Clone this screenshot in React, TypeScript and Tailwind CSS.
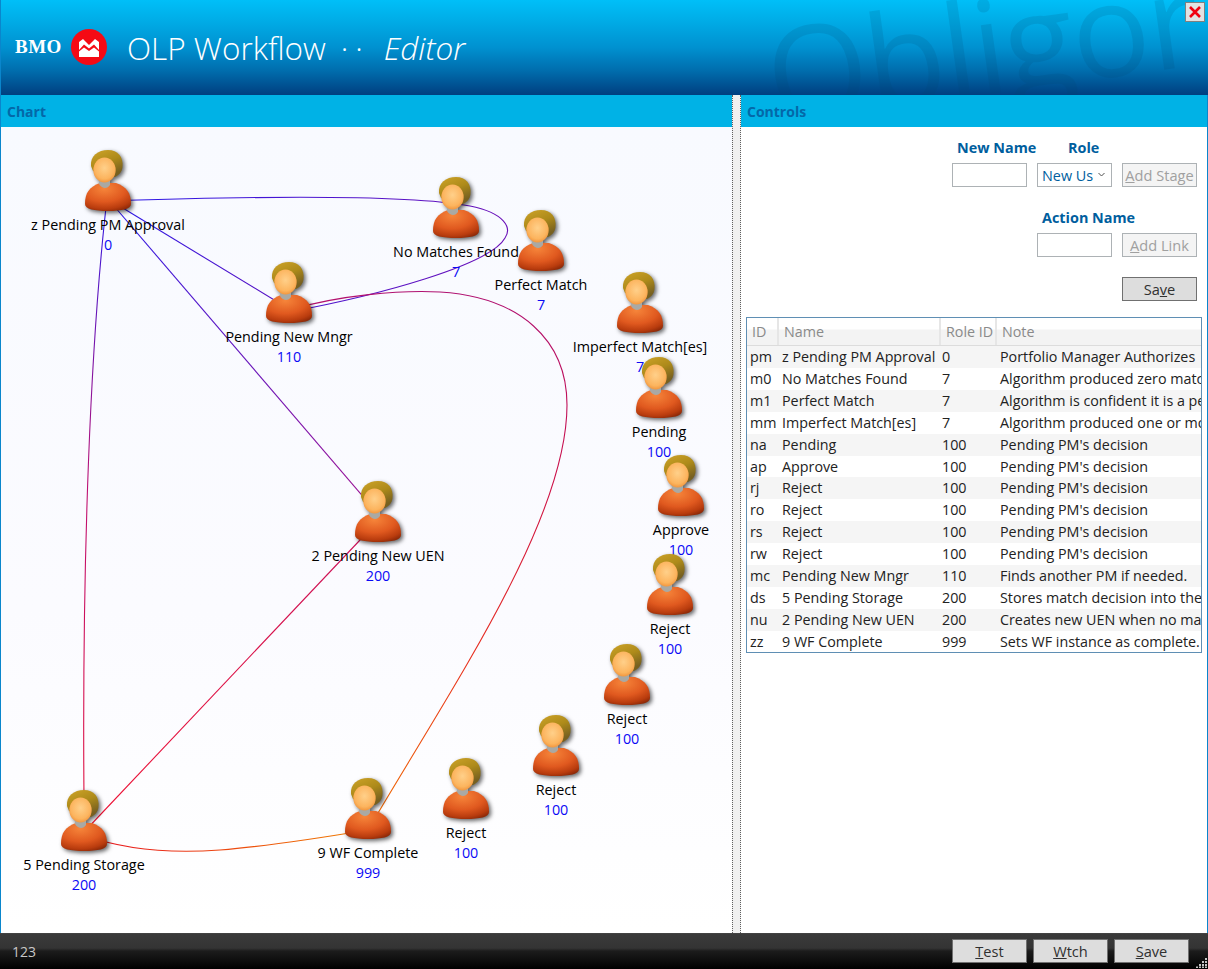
import React from "react";

const FONT = "font-['Open_Sans','Noto_Sans',sans-serif]";

const nodes = [
  { name: "Imperfect Match[es]", role: "7", cx: 640, top: 272 },
  { name: "Pending", role: "100", cx: 659, top: 357 },
  { name: "Approve", role: "100", cx: 681, top: 455 },
  { name: "Reject", role: "100", cx: 670, top: 554 },
  { name: "Reject", role: "100", cx: 627, top: 644 },
  { name: "Reject", role: "100", cx: 556, top: 715 },
  { name: "Reject", role: "100", cx: 466, top: 758 },
  { name: "Perfect Match", role: "7", cx: 541, top: 210 },
  { name: "No Matches Found", role: "7", cx: 456, top: 177 },
  { name: "z Pending PM Approval", role: "0", cx: 108, top: 150 },
  { name: "Pending New Mngr", role: "110", cx: 289, top: 262 },
  { name: "2 Pending New UEN", role: "200", cx: 378, top: 481 },
  { name: "5 Pending Storage", role: "200", cx: 84, top: 790 },
  { name: "9 WF Complete", role: "999", cx: 368, top: 778 },
];

const rows = [
  ["pm", "z Pending PM Approval", "0", "Portfolio Manager Authorizes"],
  ["m0", "No Matches Found", "7", "Algorithm produced zero matches"],
  ["m1", "Perfect Match", "7", "Algorithm is confident it is a perfect match"],
  ["mm", "Imperfect Match[es]", "7", "Algorithm produced one or more matches"],
  ["na", "Pending", "100", "Pending PM's decision"],
  ["ap", "Approve", "100", "Pending PM's decision"],
  ["rj", "Reject", "100", "Pending PM's decision"],
  ["ro", "Reject", "100", "Pending PM's decision"],
  ["rs", "Reject", "100", "Pending PM's decision"],
  ["rw", "Reject", "100", "Pending PM's decision"],
  ["mc", "Pending New Mngr", "110", "Finds another PM if needed."],
  ["ds", "5 Pending Storage", "200", "Stores match decision into the database"],
  ["nu", "2 Pending New UEN", "200", "Creates new UEN when no match exists"],
  ["zz", "9 WF Complete", "999", "Sets WF instance as complete."],
];

function Person() {
  return (
    <svg width="60" height="70" viewBox="0 0 60 70" className="block [filter:blur(0.35px)_drop-shadow(2px_2px_2px_rgba(0,0,0,0.6))]">
      <defs>
        <linearGradient id="hair" x1="0" y1="0" x2="0.5" y2="1">
          <stop offset="0" stopColor="#cfa428" />
          <stop offset="0.55" stopColor="#ad8a1a" />
          <stop offset="1" stopColor="#776020" />
        </linearGradient>
        <radialGradient id="face" cx="0.5" cy="0.42" r="0.62">
          <stop offset="0" stopColor="#ffd08a" />
          <stop offset="0.7" stopColor="#fcb45e" />
          <stop offset="1" stopColor="#ef8f36" />
        </radialGradient>
        <radialGradient id="body" cx="0.42" cy="0.2" r="0.85">
          <stop offset="0" stopColor="#f6853a" />
          <stop offset="0.55" stopColor="#e0591f" />
          <stop offset="0.85" stopColor="#b93c0e" />
          <stop offset="1" stopColor="#8f2a08" />
        </radialGradient>
      </defs>
      <path d="M3 61C3 50 7 44 18 40L34 40C45 44 49 50 49 61C49 66 40 68 26 68C12 68 3 66 3 61Z" fill="url(#body)" />
      <path d="M17 37L17 41C20 45.5 25 46.5 28 42L28 37Z" fill="#a9a9a4" />
      <path d="M9 23C8 13 16 7 26 7C36 7 41.5 14 40.5 24C40 29 37 32 33 34L20 31L11 28Z" fill="url(#hair)" />
      <ellipse cx="22.5" cy="27" rx="11.2" ry="12.5" fill="url(#face)" />
    </svg>
  );
}

function Node({ name, role, cx, top }: { name: string; role: string; cx: number; top: number }) {
  return (
    <div
      className="absolute w-[220px] -ml-[110px] flex flex-col items-center text-[14.35px] leading-[20px] text-black whitespace-nowrap"
      style={{ left: cx - 1, top: top - 134 }}
    >
      <div className="w-[60px] h-[72px] relative">
        <div className="absolute left-[4px] top-0">
          <Person />
        </div>
      </div>
      <span>{name}</span>
      <span className="text-[#0a0af5]">{role}</span>
    </div>
  );
}

function Edges() {
  const grad = (id: string, x1: number, y1: number, x2: number, y2: number, stops: string[]) => (
    <linearGradient id={id} gradientUnits="userSpaceOnUse" x1={x1} y1={y1} x2={x2} y2={y2}>
      {stops.map((c, i) => (
        <stop key={i} offset={i / (stops.length - 1)} stopColor={c} />
      ))}
    </linearGradient>
  );
  return (
    <svg className="absolute -left-px -top-[127px]" width="1208" height="969" fill="none" strokeWidth="1.1">
      <defs>
        {grad("e1", 108, 190, 84, 800, ["#2a18e8", "#c01070", "#e01040"])}
        {grad("e2", 108, 199, 378, 514, ["#2a18e8", "#a01090"])}
        {grad("e3", 108, 199, 289, 310, ["#2a18e8", "#5a10c0"])}
        {grad("e4", 108, 200, 500, 260, ["#2a18e8", "#6a10b8"])}
        {grad("e5", 400, 290, 370, 830, ["#b01070", "#cc1048", "#e83020", "#f07000"])}
        {grad("e6", 378, 521, 84, 832, ["#c8105a", "#f01030"])}
        {grad("e7", 84, 835, 368, 830, ["#e81020", "#f08000"])}
      </defs>
      <path d="M108 190C90 340 82 560 84 800" stroke="url(#e1)" />
      <path d="M108 199L378 514" stroke="url(#e2)" />
      <path d="M108 199L289 309" stroke="url(#e3)" />
      <path d="M108 201C230 197 400 193 470 206C505 213 512 228 505 238C490 265 380 295 289 312" stroke="url(#e4)" />
      <path d="M289 310C340 295 400 290 440 292C520 297 567 340 567 405C567 520 450 690 368 830" stroke="url(#e5)" />
      <path d="M378 521L84 832" stroke="url(#e6)" />
      <path d="M84 835C130 852 180 853 220 850C270 846 320 838 368 830" stroke="url(#e7)" />
    </svg>
  );
}

function Btn({ children, disabled }: { children: React.ReactNode; disabled?: boolean }) {
  return (
    <div
      className={`w-[75px] h-[24px] flex items-center justify-center pt-[1px] text-[14.6px] leading-none whitespace-nowrap border ${
        disabled ? "border-[#adb2b5] bg-[#f4f4f4] text-[#a0a0a0]" : "border-[#707070] bg-[#dddddd] text-[#303030]"
      }`}
    >
      <span>{children}</span>
    </div>
  );
}

export default function App() {
  return (
    <div className={`w-[1208px] h-[969px] flex flex-col overflow-hidden bg-white ${FONT}`}>
      {/* Header */}
      <header className="relative h-[95px] shrink-0 overflow-hidden flex items-center bg-[linear-gradient(to_bottom,#00bff8_0%,#00aee8_20%,#0091d0_50%,#006cac_75%,#003f80_100%)] border-l border-[#0a86cc]">
        <span className="absolute left-[766px] -top-[25px] text-[130px] leading-[200px] tracking-[-2px] text-[#00456f] opacity-[0.14] -rotate-[8deg] origin-left whitespace-nowrap">
          Obligor
        </span>
        <span className="ml-[14px] w-[50px] font-['Liberation_Serif',serif] font-bold text-[19px] tracking-[0.5px] text-white">BMO</span>
        <svg width="36" height="36" viewBox="0 0 36 36" className="ml-[6px] -mt-[1px] shrink-0">
          <circle cx="18" cy="18" r="18" fill="#f50a14" />
          <path d="M8 21V13L12 10L18 16L24 10L28 13V21L23 15.5L18 19.5L13 15.5Z" fill="#fff" />
          <path d="M8 22.5L13 18.5L18 22L23 18.5L28 22.5V28H8Z" fill="#fff" />
        </svg>
        <span className="ml-[20px] text-[31.5px] font-light text-white whitespace-nowrap">OLP Workflow</span>
        <span className="ml-[15px] text-[31.5px] font-light text-white whitespace-nowrap tracking-[7px]">··</span>
        <span className="ml-[14px] text-[31.5px] font-light italic text-white whitespace-nowrap">Editor</span>
        <div className="absolute right-[3px] top-[2px] w-[20px] h-[20px] border border-[#808080] bg-[#e2e2e2] flex items-center justify-center">
          <svg width="14" height="14" viewBox="0 0 14 14">
            <path d="M2 2L12 12M12 2L2 12" stroke="#f00010" strokeWidth="2.6" />
          </svg>
        </div>
      </header>

      {/* Main */}
      <main className="flex-1 min-h-0 flex border-x border-[#0a86cc]">
        {/* Chart */}
        <section className="w-[731px] shrink-0 flex flex-col">
          <div className="h-[32px] shrink-0 bg-[#00b2e6] flex items-center pl-[6px] text-[14px] font-bold text-[#0468a8]">Chart</div>
          <div className="relative flex-1 overflow-hidden bg-[linear-gradient(to_bottom,#f8faff_0%,#fbfbff_60%,#ffffff_100%)]">
            <Edges />
            {nodes.map((n, i) => (
              <Node key={i} {...n} />
            ))}
          </div>
        </section>

        {/* Splitter */}
        <div className="w-[9px] shrink-0 bg-[#f0f0f0] border-x border-dotted border-[#606060]" />

        {/* Controls */}
        <section className="flex-1 min-w-0 flex flex-col">
          <div className="h-[32px] shrink-0 bg-[#00b2e6] flex items-center pl-[6px] text-[14px] font-bold text-[#0468a8]">Controls</div>
          <div className="flex-1 min-h-0 flex flex-col">
            <div className="pt-[11px] pr-[10px] flex flex-col items-end">
              <div className="h-[20px] w-[245px] flex text-[14.4px] font-bold text-[#005e9e] leading-[20px] whitespace-nowrap">
                <span className="ml-[5px] w-[78px]">New Name</span>
                <span className="ml-[33px]">Role</span>
              </div>
              <div className="mt-[5px] w-[245px] grid grid-cols-[75px_75px_75px] gap-x-[10px]">
                <div className="h-[24px] border border-[#adb2b5] bg-white" />
                <div className="h-[24px] pt-[1px] border border-[#adb2b5] bg-white flex items-center pl-[4px] text-[14.4px] text-[#005e9e] relative">
                  New Us
                  <svg width="7" height="5" viewBox="0 0 7 5" className="absolute right-[6px] top-[8px]">
                    <path d="M0.5 1L3.5 4L6.5 1" fill="none" stroke="#505050" strokeWidth="1" />
                  </svg>
                </div>
                <Btn disabled>
                  <u>A</u>dd Stage
                </Btn>
              </div>
              <div className="mt-[21px] h-[20px] w-[160px] pl-[5px] text-[14.4px] font-bold text-[#005e9e] leading-[20px] whitespace-nowrap">
                Action Name
              </div>
              <div className="mt-[5px] w-[160px] grid grid-cols-[75px_75px] gap-x-[10px]">
                <div className="h-[24px] border border-[#adb2b5] bg-white" />
                <Btn disabled>
                  <u>A</u>dd Link
                </Btn>
              </div>
              <div className="mt-[20px]">
                <Btn>
                  Sa<u>v</u>e
                </Btn>
              </div>
            </div>

            {/* Table */}
            <div className="mt-[16px] ml-[5px] mr-[5px] h-[336px] border border-[#5f8fb4] overflow-hidden text-[14.3px] leading-[22px] text-[#222]">
              <div className="h-[28px] grid grid-cols-[32px_162px_56px_1fr] bg-[linear-gradient(to_bottom,#ffffff_0%,#ffffff_40%,#f3f3f3_45%,#f3f3f3_100%)] border-b border-[#dcdcdc] text-[#8a8a8a]">
                {["ID", "Name", "Role ID", "Note"].map((h) => (
                  <div key={h} className="pl-[5px] pt-[3px] border-r-2 border-[#e6e6e6] last:border-r-0 whitespace-nowrap">
                    {h}
                  </div>
                ))}
              </div>
              {rows.map((r, i) => (
                <div key={r[0]} className={`h-[21.92px] grid grid-cols-[32px_162px_56px_1fr] ${i % 2 === 0 ? "bg-[#f5f5f5]" : "bg-white"}`}>
                  <div className="pl-[3px] whitespace-nowrap overflow-hidden">{r[0]}</div>
                  <div className="pl-[3px] whitespace-nowrap overflow-hidden">{r[1]}</div>
                  <div className="pl-[1px] whitespace-nowrap overflow-hidden">{r[2]}</div>
                  <div className="pl-[3px] whitespace-nowrap overflow-hidden">{r[3]}</div>
                </div>
              ))}
            </div>
          </div>
        </section>
      </main>

      {/* Footer */}
      <footer className="relative h-[36px] shrink-0 flex items-center bg-[linear-gradient(to_bottom,#4a4a4a_0%,#3a3a3a_3%,#343434_42%,#1c1c1c_50%,#000000_100%)]">
        <span className="ml-[12px] text-[14px] text-[#c8c8c8]">123</span>
        <div className="ml-auto mr-[19px] flex gap-[6px]">
          <Btn>
            <u>T</u>est
          </Btn>
          <Btn>
            <u>W</u>tch
          </Btn>
          <Btn>
            <u>S</u>ave
          </Btn>
        </div>
        <svg width="12" height="12" viewBox="0 0 12 12" className="absolute right-[1px] bottom-[1px]">
          <path d="M10 2h2v2h-2zM7 5h2v2H7zM10 5h2v2h-2zM4 8h2v2H4zM7 8h2v2H7zM10 8h2v2h-2zM1 10.5h2v1.5H1zM4 10.5h2v1.5H4zM7 10.5h2v1.5H7zM10 10.5h2v1.5h-2z" fill="#c4c4c4" />
        </svg>
      </footer>
    </div>
  );
}
